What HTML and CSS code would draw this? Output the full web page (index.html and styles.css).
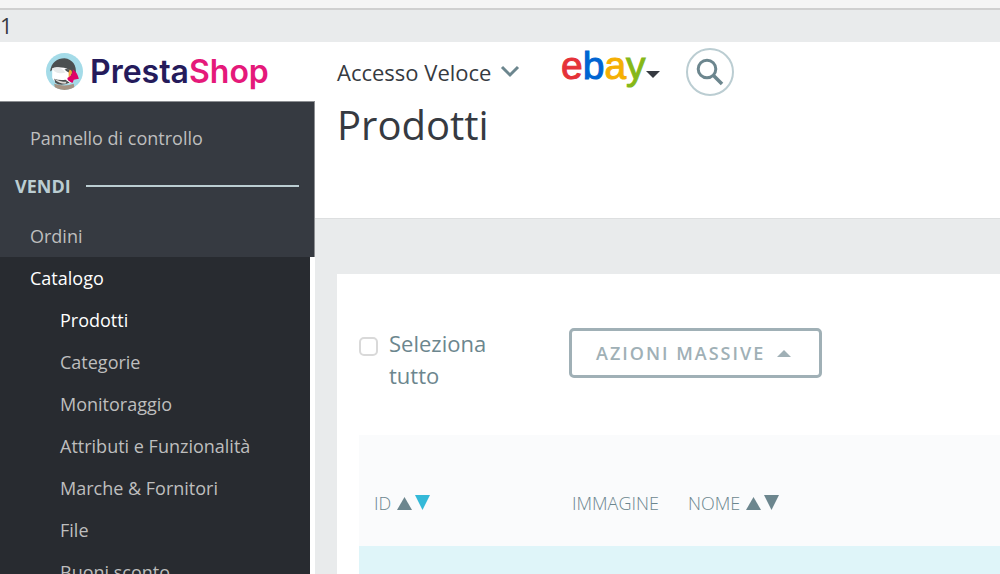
FILE: index.html
```html
<!DOCTYPE html>
<html lang="it">
<head>
<meta charset="utf-8">
<title>Prodotti - PrestaShop</title>
<link rel="stylesheet" href="styles.css">
</head>
<body>
<div class="window-edge"></div>
<div class="notice">1</div>
<header class="topbar">
  <a class="brand" href="#" aria-label="PrestaShop">
    <svg class="brand-icon" viewBox="0 0 36 36" aria-hidden="true">
      <defs><clipPath id="disc"><circle cx="18" cy="18" r="18"/></clipPath></defs>
      <g clip-path="url(#disc)">
        <rect width="36" height="36" fill="#a4dbe8"/>
        <path d="M9 36 L8 30 Q18 33 27 30 L28 36Z" fill="#a59383"/>
        <path d="M4 18 C5 9 11 5 18 5 C26 6 30 12 29 20 L25 27 L17 20 L8 15Z" fill="#4b4f50"/>
        <path d="M6 15 C11 13 18 14 22 16 L24 20 L24 29 C17 32 9 31 6 24Z" fill="#fff"/>
        <path d="M6 15 C12 13 16 15 19 19 C14 21 8 19 6 15Z" fill="#e7eaea"/>
        <path d="M8 25 Q13 27 19 26 L23 29 Q14 33 9 29Z" fill="#4b4f50"/>
        <path d="M8 25 Q13 28 20 28 L19 30 Q12 30 8 25Z" fill="#dcdad5"/>
        <path d="M18 16 Q21 15 24 17 L22 19 Q20 18 18 16Z" fill="#4b4f50"/>
        <path d="M23 16 Q26 17 25 20 L22 25 L22 19Z" fill="#f3a63a"/>
        <path d="M26 16 C30 18 31 22 32 25 L27 26 L26 29 C23 28 20 26 21 24 C24 23 26 20 26 16Z" fill="#df0067"/>
      </g>
    </svg>
    <span class="brand-name">Presta<span class="brand-shop">Shop</span></span>
  </a>
  <button class="quick" type="button">Accesso Veloce
    <svg class="chevron" viewBox="0 0 20 13" aria-hidden="true"><path d="M2 2 L10 10 L18 2" fill="none" stroke="#6c868e" stroke-width="3"/></svg>
  </button>
  <button class="ebay" type="button"><span class="ebay-name"><span class="e">e</span><span class="b">b</span><span class="a">a</span><span class="y">y</span></span>
    <svg class="caret" viewBox="0 0 14 7" aria-hidden="true"><path d="M0 0H14L7 7Z" fill="#363a41"/></svg>
  </button>
  <button class="search" type="button" aria-label="Cerca">
    <svg class="search-icon" viewBox="0 0 28 28" aria-hidden="true"><circle cx="11" cy="11" r="8.8" fill="none" stroke="#6c868e" stroke-width="3"/><path d="M17.500 17.500L26 26" stroke="#6c868e" stroke-width="3.600"/></svg>
  </button>
</header>
<div class="layout">
  <nav class="sidebar">
    <div class="menu-top">
      <a class="item" href="#">Pannello di controllo</a>
      <div class="section">VENDI</div>
      <a class="item" href="#">Ordini</a>
    </div>
    <div class="submenu">
      <a class="item active" href="#">Catalogo</a>
      <a class="item sub active" href="#">Prodotti</a>
      <a class="item sub" href="#">Categorie</a>
      <a class="item sub" href="#">Monitoraggio</a>
      <a class="item sub" href="#">Attributi e Funzionalità</a>
      <a class="item sub" href="#">Marche &amp; Fornitori</a>
      <a class="item sub" href="#">File</a>
      <a class="item sub" href="#">Buoni sconto</a>
    </div>
  </nav>
  <main class="main">
    <div class="page-head"><h1 class="title">Prodotti</h1></div>
    <section class="panel">
      <div class="tools">
        <div class="select-all">
          <input class="check" type="checkbox" id="all">
          <label class="check-label" for="all">Seleziona tutto</label>
        </div>
        <button class="bulk" type="button">AZIONI MASSIVE
          <svg class="caret" viewBox="0 0 14 7" aria-hidden="true"><path d="M0 7H14L7 0Z" fill="#a0b0b6"/></svg>
        </button>
      </div>
      <table class="products">
        <thead>
          <tr>
            <th class="col-id">ID <svg class="sort" viewBox="0 0 33 15" aria-hidden="true"><path d="M0 15H15L7.500 2Z" fill="#6c868e"/><path d="M18 0H33L25.500 15Z" fill="#34b9d8"/></svg></th>
            <th class="col-image">IMMAGINE</th>
            <th>NOME <svg class="sort" viewBox="0 0 33 15" aria-hidden="true"><path d="M0 15H15L7.500 2Z" fill="#6c868e"/><path d="M18 0H33L25.500 15Z" fill="#6c868e"/></svg></th>
          </tr>
        </thead>
        <tbody><tr><td colspan="3"></td></tr></tbody>
      </table>
    </section>
  </main>
</div>
</body>
</html>
```
FILE: styles.css
```css
* { box-sizing: border-box; }
body {
  margin: 0;
  height: 100vh;
  overflow: hidden;
  display: flex;
  flex-direction: column;
  background: #e9ebec;
  color: #363a41;
  font-family: "Open Sans", "Noto Sans", sans-serif;
  font-size: 18px;
}
button { border: 0; background: none; padding: 0; font: inherit; color: inherit; }
a { color: inherit; text-decoration: none; }
svg { flex: none; }
.window-edge { flex: none; height: 10px; background: #f5f5f5; border-bottom: 2px solid #d0d0d0; }
.notice { flex: none; height: 32px; font-size: 22px; line-height: 30px; }
.topbar { flex: none; display: flex; align-items: center; height: 59px; background: #fff; }
.brand { display: flex; align-items: center; gap: 7px; width: 337px; padding-left: 46px; }
.brand-icon { width: 37px; height: 37px; }
.brand-name { font-family: Inter, sans-serif; font-size: 32px; font-weight: 600; line-height: 40px; color: #251b5b; }
.brand-shop { color: #e5197a; }
.quick { display: flex; align-items: center; gap: 9px; width: 224px; font-size: 22px; }
.chevron { width: 20px; height: 13px; }
.ebay { display: flex; align-items: center; width: 125px; }
.ebay-name { font-family: "Liberation Sans", Arial, sans-serif; font-size: 39px; line-height: 40px; padding-bottom: 12px; -webkit-text-stroke: 1px; }
.e { color: #e53238; }
.b { color: #0064d2; }
.a { color: #f5af02; }
.y { color: #86b817; }
.ebay .caret { margin-top: 6px; }
.caret { width: 14px; height: 7px; }
.search { display: flex; align-items: center; justify-content: center; width: 48px; height: 48px; border: 2px solid #bbcdd2; border-radius: 50%; }
.search-icon { width: 28px; height: 28px; }
.layout { flex: 1; display: flex; min-height: 0; }
.sidebar { flex: none; width: 315px; background: #fff; }
.menu-top { background: #363a41; padding-top: 15px; border-top: 1px solid #8c8e92; border-right: 1px solid #8c8e92; }
.item { display: block; padding-left: 30px; line-height: 42px; color: #bebebe; }
.section { display: flex; align-items: center; gap: 15px; height: 56px; padding: 0 15px 2px; font-weight: 700; color: #bbcdd2; }
.section::after { content: ""; flex: 1; height: 2px; background: #bbcdd2; }
.submenu { margin-right: 5px; background: #282b30; }
.sub { padding-left: 60px; }
.active { color: #fff; }
.main { flex: 1; min-width: 0; }
.page-head { height: 118px; padding-left: 22px; background: #fff; border-bottom: 1px solid #dddfe0; }
.title { margin: 0; font-size: 40px; line-height: 48px; font-weight: 400; }
.panel { margin: 55px 0 0 22px; padding: 54px 0 0 22px; background: #fff; }
.tools { display: flex; gap: 24px; align-items: flex-start; }
.select-all { display: flex; gap: 11px; width: 186px; padding-right: 48px; font-size: 22px; line-height: 32px; color: #6c868e; }
.check-label { margin-top: -1px; }
.check { appearance: none; flex: none; width: 19px; height: 19px; margin: 9px 0 0; border: 2px solid #d9d9d9; border-radius: 5px; background: #fff; }
.bulk { display: flex; align-items: center; gap: 12px; height: 50px; padding: 0 28px 0 24px; border: 3px solid #a0b0b6; border-radius: 5px; font-size: 18px; font-weight: 600; letter-spacing: 2px; color: #a0b0b6; }
.products { width: 100%; margin-top: 44px; border-collapse: collapse; table-layout: fixed; background: #fafbfc; }
.products th { height: 111px; padding: 24px 0 0 15px; text-align: left; font-weight: 300; color: #6c868e; }
.products .col-id { width: 198px; }
.products .col-image { width: 116px; }
.products td { height: 60px; padding: 0; background: #dff5f9; }
.sort { width: 33px; height: 15px; margin-left: 1px; }
```
